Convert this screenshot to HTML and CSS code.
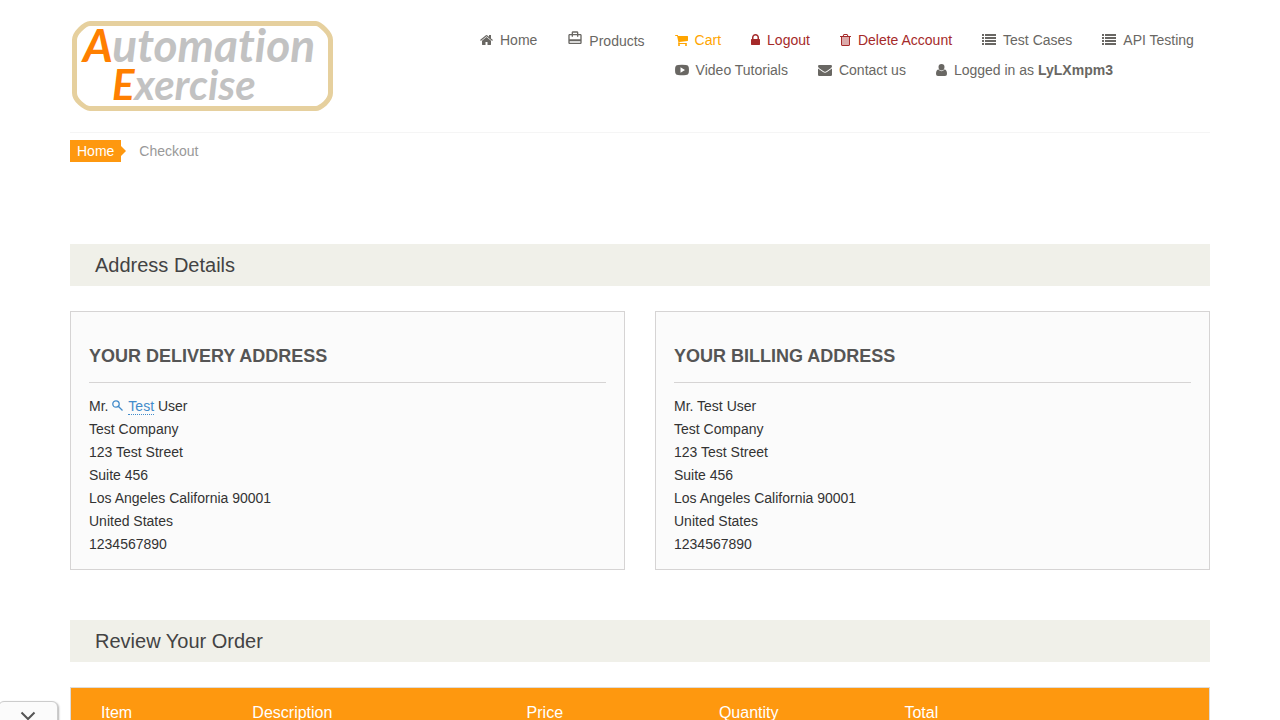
FILE: index.html
```html
<!DOCTYPE html>
<html lang="en">
<head>
<meta charset="utf-8">
<meta name="viewport" content="width=device-width, initial-scale=1">
<title>Automation Exercise - Checkout</title>
<link rel="stylesheet" href="styles.css">
</head>
<body>
<div class="container">
  <header class="header">
    <a class="logo" href="#" aria-label="Automation Exercise">
      <svg width="262" height="91" viewBox="0 0 262 91">
        <path class="logo-frame" d="M18 2.500H244Q247 2.500 253 8.500Q258.500 14 258.500 19V72Q258.500 77 253 82.500Q247 87.500 244 87.500H18Q14 87.500 8 82Q2.500 77 2.500 72V19Q2.500 14 8 8.500Q14 2.500 18 2.500Z"/>
        <text class="logo-text" x="11" y="41"><tspan class="logo-cap">A</tspan>utomation</text>
        <text class="logo-text logo-small" x="40" y="79"><tspan class="logo-cap">E</tspan>xercise</text>
      </svg>
    </a>
    <nav class="nav" aria-label="Main">
      <ul class="nav-list">
        <li><a href="#"><svg width="13" height="14" viewBox="64 0 1664 1792"><path d="M1472 992v480q0 26-19 45t-45 19h-384v-384h-256v384h-384q-26 0-45-19t-19-45v-480q0-1 .5-3t.5-3l575-474 575 474q1 2 1 6zm223-69l-62 74q-8 9-21 11h-3q-13 0-21-7l-692-577-692 577q-12 8-24 7-13-2-21-11l-62-74q-8-10-7-23.500t11-21.500l719-599q32-26 76-26t76 26l244 204v-195q0-14 9-23t23-9h192q14 0 23 9t9 23v408l219 182q10 8 11 21.500t-7 23.500z"/></svg>Home</a></li>
        <li><a class="tall" href="#"><svg width="16" height="16" viewBox="0 0 24 24"><path d="M20 6h-3V4c0-1.110-.89-2-2-2H9c-1.110 0-2 .89-2 2v2H4c-1.110 0-2 .89-2 2v11c0 1.110.89 2 2 2h16c1.110 0 2-.89 2-2V8c0-1.110-.89-2-2-2zM9 4h6v2H9V4zm11 15H4v-2h16v2zm0-5H4V8h3v2h2V8h6v2h2V8h3v6z"/></svg>Products</a></li>
        <li><a class="active" href="#"><svg width="13" height="14" viewBox="64 0 1664 1792"><path d="M704 1536q0 52-38 90t-90 38-90-38-38-90 38-90 90-38 90 38 38 90zm896 0q0 52-38 90t-90 38-90-38-38-90 38-90 90-38 90 38 38 90zm128-1088v512q0 24-16.500 42.500t-40.500 21.500l-1044 122q13 60 13 70 0 16-24 64h920q26 0 45 19t19 45-19 45-45 19h-1024q-26 0-45-19t-19-45q0-11 8-31.500t16-36 21.500-40 15.500-29.500l-177-823h-204q-26 0-45-19t-19-45 19-45 45-19h256q16 0 28.500 6.500t19.500 15.500 13 24.500 8 26 5.500 29.500 4.500 26h1201q26 0 45 19t19 45z"/></svg>Cart</a></li>
        <li><a class="danger" href="#"><svg width="9" height="14" viewBox="320 0 1152 1792"><path d="M640 768h512v-192q0-106-75-181t-181-75-181 75-75 181v192zm832 96v576q0 40-28 68t-68 28h-960q-40 0-68-28t-28-68v-576q0-40 28-68t68-28h32v-192q0-184 132-316t316-132 316 132 132 316v192h32q40 0 68 28t28 68z"/></svg>Logout</a></li>
        <li><a class="danger" href="#"><svg width="11" height="14" viewBox="192 0 1408 1792"><path d="M1344 1460v-948h-896v948q0 22 7 40.500t14.500 27 10.500 8.500h832q3 0 10.500-8.500t14.500-27 7-40.500zm-672-1076h448l-48-117q-7-9-17-11h-317q-10 2-17 11zm928 32v64q0 14-9 23t-23 9h-96v948q0 83-47 143.500t-113 60.500h-832q-66 0-113-58.500t-47-141.500v-952h-96q-14 0-23-9t-9-23v-64q0-14 9-23t23-9h309l70-167q15-37 54-63t79-26h320q40 0 79 26t54 63l70 167h309q14 0 23 9t9 23z"/><path opacity=".4" d="M448 512H1344V1536H448Z"/></svg>Delete Account</a></li>
        <li><a href="#"><svg width="14" height="14" viewBox="0 0 14 14"><path d="M0 1h2v2H0zM3 1h11v2H3zM0 4h2v2H0zM3 4h11v2H3zM0 7h2v2H0zM3 7h11v2H3zM0 10h2v2H0zM3 10h11v2H3z"/></svg>Test Cases</a></li>
        <li><a href="#"><svg width="14" height="14" viewBox="0 0 14 14"><path d="M0 1h2v2H0zM3 1h11v2H3zM0 4h2v2H0zM3 4h11v2H3zM0 7h2v2H0zM3 7h11v2H3zM0 10h2v2H0zM3 10h11v2H3z"/></svg>API Testing</a></li>
        <li><a href="#"><svg width="14" height="14" viewBox="0 0 14 14"><path fill-rule="evenodd" d="M3 2Q7 1.600 11 2Q13.300 2 13.700 4Q14.200 7 13.700 10Q13.300 12 11 12Q7 12.400 3 12Q.7 12 .3 10Q-.2 7 .3 4Q.7 2 3 2ZM5.500 4.200V9.800L10 7Z"/></svg>Video Tutorials</a></li>
        <li><a href="#"><svg width="14" height="14" viewBox="0 0 14 14"><path d="M0 3.200Q0 2 1.200 2H12.800Q14 2 14 3.200Q14 4.300 12.800 5.200L8.500 8.200Q7 9.200 5.500 8.200L1.200 5.200Q0 4.300 0 3.200ZM0 5.500L5 9Q7 10.400 9 9L14 5.500V11.800Q14 13 12.800 13H1.200Q0 13 0 11.800Z"/></svg>Contact us</a></li>
        <li><a href="#"><svg width="11" height="14" viewBox="0 0 11 14"><path d="M5.500 1A3 3 0 0 1 8.500 4Q8.400 7.500 5.500 7.500Q2.600 7.500 2.500 4A3 3 0 0 1 5.500 1ZM2.600 6.500Q3.800 8.300 5.500 8.300Q7.200 8.300 8.400 6.500Q11 6.600 11 11Q11 13 9 13H2Q0 13 0 11Q0 6.600 2.600 6.500Z"/></svg><span>Logged in as <b>LyLXmpm3</b></span></a></li>
      </ul>
    </nav>
  </header>

  <main>
    <nav aria-label="Breadcrumb">
      <ol class="breadcrumb">
        <li><a class="crumb" href="#">Home</a></li>
        <li>Checkout</li>
      </ol>
    </nav>

    <h2 class="heading">Address Details</h2>
    <div class="addresses">
      <section class="address">
        <h3>Your delivery address</h3>
        <ul>
          <li>Mr. <a class="lookup" href="#"><svg width="12" height="12" viewBox="0 0 12 12"><circle cx="4" cy="5" r="3.200"/><path d="M6.500 7.500L10.500 11.500"/></svg><span>Test</span></a> User</li>
          <li>Test Company</li>
          <li>123 Test Street</li>
          <li>Suite 456</li>
          <li>Los Angeles California 90001</li>
          <li>United States</li>
          <li>1234567890</li>
        </ul>
      </section>
      <section class="address">
        <h3>Your billing address</h3>
        <ul>
          <li>Mr. Test User</li>
          <li>Test Company</li>
          <li>123 Test Street</li>
          <li>Suite 456</li>
          <li>Los Angeles California 90001</li>
          <li>United States</li>
          <li>1234567890</li>
        </ul>
      </section>
    </div>

    <h2 class="heading">Review Your Order</h2>
    <table class="order">
      <thead>
        <tr>
          <th class="col-item" scope="col">Item</th>
          <th class="col-description" scope="col">Description</th>
          <th class="col-price" scope="col">Price</th>
          <th class="col-quantity" scope="col">Quantity</th>
          <th scope="col">Total</th>
        </tr>
      </thead>
    </table>
  </main>
</div>
<button class="drawer-toggle" type="button" aria-label="Collapse">
  <svg width="16" height="10" viewBox="0 0 16 10"><path d="M1.500 1.500L8 8L14.500 1.500"/></svg>
</button>
</body>
</html>
```

FILE: styles.css
```css
* { box-sizing: border-box; }

body {
  margin: 0;
  height: 100vh;
  overflow: hidden;
  background: #fff;
  color: #333;
  font: 14px/20px "Liberation Sans", Arial, sans-serif;
}

a { color: inherit; text-decoration: none; }
ul, ol { list-style: none; margin: 0; padding: 0; }

.container {
  max-width: 1170px;
  margin: 0 auto;
  padding: 0 15px;
}

/* Header */
.header {
  display: flex;
  justify-content: space-between;
  padding: 21px 0 20px;
  border-bottom: 1px solid #f5f5f5;
}
.logo { padding-left: 2px; }
.logo svg { display: block; overflow: visible; }
.logo-frame { fill: #fff; stroke: #e6d09e; stroke-width: 5; }
.logo-text {
  fill: #c2c2c2;
  font: italic 700 46px Lato, sans-serif;
  font-variant-ligatures: none;
}
.logo-small { font-size: 42px; }
.logo-cap { fill: #ff7f00; }

.nav {
  width: 66%;
  max-width: 745px;
  padding-top: 4px;
  color: #696763;
}
.nav-list li { float: left; }
.nav-list a {
  display: flex;
  align-items: center;
  gap: 7px;
  padding: 5px 15px;
}
.nav-list svg { flex: none; fill: currentColor; }
.nav-list .tall { align-items: flex-start; gap: 6px; line-height: 22px; }
.nav-list .active { color: orange; }
.nav-list .danger { color: brown; }

/* Breadcrumb */
.breadcrumb {
  display: flex;
  gap: 18px;
  padding: 7px 0;
  margin-bottom: 75px;
  color: #999;
  line-height: 22px;
}
.crumb {
  position: relative;
  display: block;
  padding: 0 7px;
  background: #fe980f;
  color: #fff;
}
.crumb::after {
  content: "";
  position: absolute;
  left: 100%;
  top: 6px;
  border: 5px solid transparent;
  border-left-color: #fe980f;
  border-right: 0;
}

.heading {
  margin: 0 0 25px;
  padding: 10px 25px;
  background: #f0f0e9;
  color: #434343;
  font-size: 20px;
  font-weight: 400;
  line-height: 22px;
}

/* Addresses */
.addresses {
  display: grid;
  grid-template-columns: 1fr 1fr;
  gap: 30px;
  margin-bottom: 50px;
}
.address {
  padding: 34px 18px 13px;
  border: 1px solid #d6d4d4;
  background: #fbfbfb;
}
.address h3 {
  margin: 0 0 12px;
  padding-bottom: 16px;
  border-bottom: 1px solid #d6d4d4;
  color: #555;
  font-size: 18px;
  line-height: 20px;
  text-transform: uppercase;
}
.address li { line-height: 23px; }
.lookup { color: #428bca; }
.lookup svg {
  margin-right: 4px;
  fill: none;
  stroke: currentColor;
  stroke-width: 1.3;
}
.lookup span { border-bottom: 1px dotted currentColor; }

/* Order table */
.order {
  width: 100%;
  border: 1px solid #dcdcdc;
  border-spacing: 0;
  table-layout: fixed;
}
.order th {
  padding: 14px 30px;
  background: #fe980f;
  color: #fff;
  font-size: 16px;
  font-weight: 400;
  line-height: 22px;
  text-align: left;
}
.col-item { width: 13.3%; }
.col-description { width: 24.1%; }
.col-price { width: 16.9%; }
.col-quantity { width: 16.3%; }

.drawer-toggle {
  position: fixed;
  left: -2px;
  bottom: -11px;
  width: 60px;
  height: 30px;
  padding: 0;
  border: 1px solid #ccc;
  border-radius: 6px;
  background: #fbfbfb;
  box-shadow: 1px 1px 2px rgba(0, 0, 0, 0.3);
}
.drawer-toggle path { fill: none; stroke: #555; stroke-width: 2; }
```
